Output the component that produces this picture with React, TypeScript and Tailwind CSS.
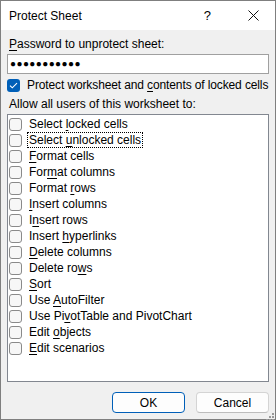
import React from "react";

const font = { fontFamily: '"Liberation Sans", Arial, sans-serif' };

function U({ children }: { children: React.ReactNode }) {
  return <span className="underline underline-offset-[2px] decoration-[1px]">{children}</span>;
}

const items: [string, string, string][] = [
  ["Select ", "l", "ocked cells"],
  ["Select ", "u", "nlocked cells"],
  ["", "F", "ormat cells"],
  ["For", "m", "at columns"],
  ["Format ", "r", "ows"],
  ["", "I", "nsert columns"],
  ["I", "n", "sert rows"],
  ["Insert ", "h", "yperlinks"],
  ["", "D", "elete columns"],
  ["Delete ro", "w", "s"],
  ["", "S", "ort"],
  ["Use ", "A", "utoFilter"],
  ["Use Pi", "v", "otTable and PivotChart"],
  ["Edit ", "o", "bjects"],
  ["", "E", "dit scenarios"],
];

function Box({ checked }: { checked?: boolean }) {
  if (checked) {
    return (
      <div className="w-[13px] h-[13px] rounded-[3px] bg-[#005fb8] flex items-center justify-center shrink-0">
        <svg width="9" height="7" viewBox="0 0 9 7">
          <path d="M1 3.6 L3.3 5.8 L8 1.2" stroke="white" strokeWidth="1.1" fill="none" />
        </svg>
      </div>
    );
  }
  return <div className="w-[13px] h-[13px] rounded-[3px] border border-[#8a8a8a] bg-[#f7f7f7] shrink-0" />;
}

export default function App() {
  return (
    <div style={font} className="w-[276px] h-[420px] border border-[#7f7f7f] bg-[#f0f0f0] flex flex-col text-[12px] text-black leading-[16px]">
      <div className="h-[29px] bg-white flex items-center pl-[8px] pr-[16px] shrink-0">
        <span className="text-[12px]">Protect Sheet</span>
        <span className="ml-auto mr-[37px] text-[13px]">?</span>
        <svg width="11" height="11" viewBox="0 0 11 11">
          <path d="M0.5 0.5 L10.5 10.5 M10.5 0.5 L0.5 10.5" stroke="#111" strokeWidth="1" />
        </svg>
      </div>
      <div className="flex-1 flex flex-col px-[6px]">
        <div className="mt-[6px] ml-[2px] h-[16px] whitespace-pre">
          <U>P</U>assword to unprotect sheet:
        </div>
        <div className="mt-[2px] h-[20px] bg-white border border-[#a0a0a0] flex items-center pl-[2px] text-[10px] tracking-[0.4px] overflow-hidden">
          ●●●●●●●●●●●
        </div>
        <div className="mt-[4px] flex items-center h-[14px]">
          <Box checked />
          <span className="ml-[7px] whitespace-pre tracking-[-0.12px]">
            {"Protect worksheet and "}<U>c</U>{"ontents of locked cells"}
          </span>
        </div>
        <div className="mt-[4px] ml-[2px] h-[16px] whitespace-pre">Allow all users of this worksheet to:</div>
        <div className="mt-[2px] h-[268px] bg-white border border-[#828790] pt-[1px] pl-[1px]">
          {items.map(([a, b, c], i) => (
            <div key={i} className="h-[16px] flex items-center">
              <Box />
              <span
                className={
                  "ml-[5px] px-[1px] h-[16px] leading-[14px] whitespace-pre border " +
                  (i === 1 ? "border-dotted border-black" : "border-transparent")
                }
              >
                {a}
                <U>{b}</U>
                {c}
              </span>
            </div>
          ))}
        </div>
        <div className="mt-[10px] flex justify-end gap-[11px]">
          <button className="w-[73px] h-[21px] rounded-[4px] border border-[#005fb8] bg-[#fdfdfd] text-[12px] leading-none">
            OK
          </button>
          <button className="w-[73px] h-[21px] rounded-[4px] border border-[#d4d4d4] border-b-[#bdbdbd] bg-[#fdfdfd] text-[12px] leading-none">
            Cancel
          </button>
        </div>
        <div className="mt-auto flex justify-end -mr-[5px] mb-[1px]">
          <svg width="8" height="8" viewBox="0 0 8 8">
            <g fill="#9a9a9a">
              <rect x="6" y="0" width="2" height="2" />
              <rect x="3" y="3" width="2" height="2" />
              <rect x="6" y="3" width="2" height="2" />
              <rect x="0" y="6" width="2" height="2" />
              <rect x="3" y="6" width="2" height="2" />
              <rect x="6" y="6" width="2" height="2" />
            </g>
          </svg>
        </div>
      </div>
    </div>
  );
}
